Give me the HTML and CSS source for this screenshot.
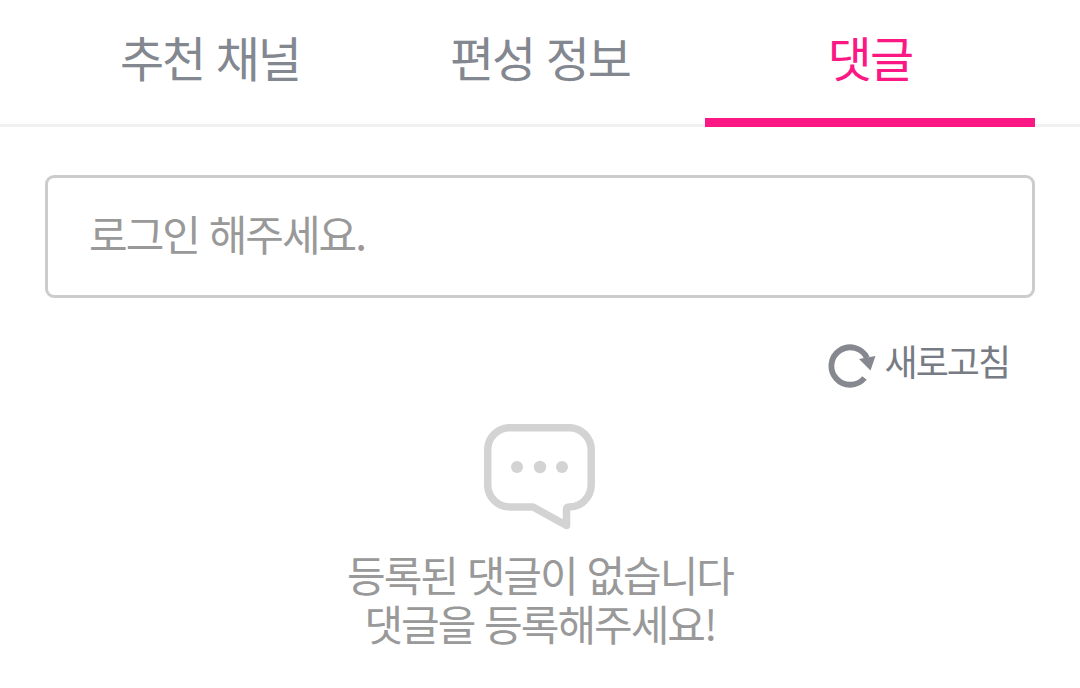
FILE: index.html
```
<!DOCTYPE html>
<html lang="ko">
<head>
    <meta charset="UTF-8">
    <meta name="viewport" content="width=device-width, initial-scale=1.0">
    <title>댓글</title>
    <link rel="stylesheet" href="styles.css">
</head>
<body>
    <nav class="tabs">
        <a href="#channels" class="tab">추천 채널</a>
        <a href="#schedule" class="tab">편성 정보</a>
        <a href="#comments" class="tab active">댓글</a>
    </nav>

    <main class="comments" id="comments">
        <input type="text" class="comment-input" aria-label="댓글" placeholder="로그인 해주세요.">

        <button type="button" class="refresh">
            <svg class="refresh-icon" viewBox="0 0 48 48" aria-hidden="true">
                <path d="M36.5 36A18.7 18.7 0 1 1 39 16" fill="none" stroke="#85888f" stroke-width="5.8"/>
                <path d="M31 17L47.5 14L42.5 28.5Z" fill="#85888f"/>
            </svg>
            새로고침
        </button>

        <div class="empty">
            <svg class="empty-icon" viewBox="0 0 112 106" aria-hidden="true">
                <path d="M26 3.7H85A22.2 22.2 0 0 1 107.2 26V61A22.2 22.2 0 0 1 85 83Q82.500 83 82.500 86V101.500L49 83H26A22.200 22.200 0 0 1 3.700 61V26A22.200 22.200 0 0 1 26 3.700Z" fill="none" stroke="#d3d3d3" stroke-width="7.5" stroke-linejoin="round"/>
                <circle cx="33" cy="43" r="6" fill="#d3d3d3"/>
                <circle cx="56" cy="43" r="6.2" fill="#d3d3d3"/>
                <circle cx="78" cy="43" r="6" fill="#d3d3d3"/>
            </svg>
            <p class="empty-text">등록된 댓글이 없습니다<br>댓글을 등록해주세요!</p>
        </div>
    </main>
</body>
</html>
```
FILE: styles.css
```
* {
    box-sizing: border-box;
}

body {
    margin: 0;
    background-color: #fff;
    font-family: "Noto Sans CJK KR", sans-serif;
    color: #999;
}

/* Tabs */
.tabs {
    display: flex;
    padding: 0 45px;
    box-shadow: inset 0 -3px 0 #f1f1f1;
}

.tab {
    flex: 1;
    padding-bottom: 6px;
    border-bottom: 9px solid transparent;
    color: #83878f;
    font-size: 48px;
    line-height: 112px;
    letter-spacing: -2px;
    text-align: center;
    text-decoration: none;
}

.tab.active {
    border-bottom-color: #fb1884;
    color: #fb1884;
}

/* Comments */
.comments {
    display: flex;
    flex-direction: column;
    padding: 48px 45px 0;
}

.comment-input {
    width: 100%;
    height: 123px;
    padding: 0 41px 8px;
    border: 3px solid #ccc;
    border-radius: 9px;
    color: #333;
    font-family: inherit;
    font-size: 42px;
    letter-spacing: -2px;
}

.comment-input::placeholder {
    color: #999;
}

.refresh {
    display: flex;
    align-items: flex-start;
    align-self: flex-end;
    gap: 9px;
    margin: 35px 26px 0 0;
    padding: 0;
    border: 0;
    background: none;
    color: #777b84;
    font-family: inherit;
    font-size: 36px;
    line-height: 54px;
    letter-spacing: -2px;
}

.refresh-icon {
    width: 48px;
    height: 48px;
    margin-top: 9px;
}

/* Empty state */
.empty {
    display: flex;
    flex-direction: column;
    align-items: center;
    margin-top: 34px;
}

.empty-icon {
    width: 112px;
    height: 106px;
}

.empty-text {
    margin: 19px 0 0;
    font-size: 42px;
    line-height: 49px;
    letter-spacing: -2px;
    text-align: center;
}
```
